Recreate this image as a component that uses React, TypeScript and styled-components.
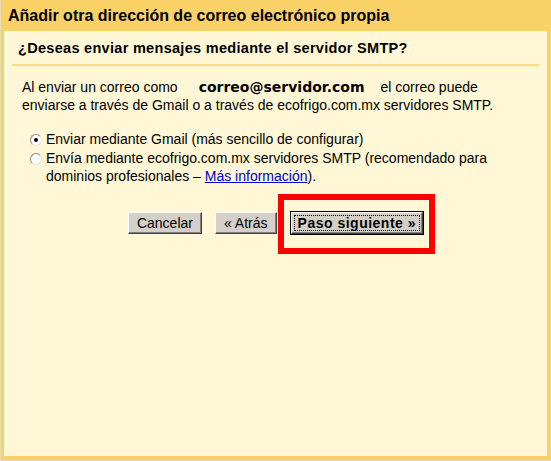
import React from "react";
import styled, { createGlobalStyle } from "styled-components";

const Global = createGlobalStyle`
  html, body { margin: 0; padding: 0; background: #fff; }
  body { font-family: "Liberation Sans", Arial, sans-serif; }
`;

const Frame = styled.div`
  width: 551px;
  height: 461px;
  box-sizing: border-box;
  background: #f9d167;
  display: flex;
  flex-direction: column;
  padding: 0 4px 4px 3px;
  border-left: 1px solid #e9dcae;
  border-bottom: 1px solid #e6dcc0;
`;

const Header = styled.div`
  height: 31px;
  display: flex;
  align-items: center;
  padding-left: 4px;
  font-size: 16px;
  font-weight: bold;
  color: #000;
  flex-shrink: 0;
`;

const Body = styled.div`
  flex: 1;
  background: #fff7d6;
  padding: 0 8px;
  display: flex;
  flex-direction: column;
`;

const Subtitle = styled.div`
  height: 35px;
  box-sizing: border-box;
  display: flex;
  align-items: center;
  padding-left: 6px;
  font-size: 14.5px;
  font-weight: bold;
  letter-spacing: 0.3px;
  border-bottom: 2px solid #f6dc88;
`;

const Paragraph = styled.p`
  margin: 12px 0 0 10px;
  font-size: 14px;
  line-height: 18px;
  color: #000;
`;

const Address = styled.b`
  font-family: "DejaVu Sans", Verdana, sans-serif;
  font-size: 14px;
  margin: 0 16px 0 21px;
`;

const Options = styled.div`
  margin: 16px 0 0 17px;
  display: flex;
  flex-direction: column;
`;

const Option = styled.label`
  display: flex;
  align-items: flex-start;
  font-size: 14px;
  line-height: 18.5px;
`;

const Radio = styled.span<{ $checked?: boolean }>`
  flex-shrink: 0;
  width: 10px;
  height: 10px;
  margin: 4px 4px 0 1px;
  border-radius: 50%;
  background: #fff;
  border: 1px solid #8a8a8a;
  border-right-color: #e4e4e4;
  border-bottom-color: #e4e4e4;
  display: flex;
  align-items: center;
  justify-content: center;
  &::after {
    content: "";
    width: 4px;
    height: 4px;
    border-radius: 50%;
    background: #000;
    display: ${(p) => (p.$checked ? "block" : "none")};
  }
`;

const Link = styled.a`
  color: #0000cc;
  text-decoration: underline;
`;

const Buttons = styled.div`
  margin-top: 26px;
  display: flex;
  justify-content: center;
  gap: 13px;
`;

const Button = styled.button<{ $primary?: boolean }>`
  position: relative;
  height: 22px;
  box-sizing: border-box;
  padding: 0 ${(p) => (p.$primary ? "6px" : "8px")};
  background: #d4d0c8;
  font-family: "Liberation Sans", Arial, sans-serif;
  font-size: 14px;
  font-weight: ${(p) => (p.$primary ? "bold" : "normal")};
  letter-spacing: ${(p) => (p.$primary ? "0.5px" : "0")};
  color: #000;
  border: 1px solid;
  border-color: #ffffff #404040 #404040 #ffffff;
  box-shadow: ${(p) =>
    p.$primary
      ? "0 0 0 1px #000, inset -1px -1px 0 #808080"
      : "inset -1px -1px 0 #808080"};
  margin-left: ${(p) => (p.$primary ? "1px" : "0")};
`;

const FocusRing = styled.span`
  position: absolute;
  inset: 2px;
  border: 1px dotted #000;
  pointer-events: none;
`;

const Highlight = styled.span`
  position: absolute;
  left: -14px;
  right: -13px;
  top: -19px;
  bottom: -21px;
  border: 6px solid #ff0000;
  pointer-events: none;
`;

export default function App() {
  return (
    <>
      <Global />
      <Frame>
        <Header>Añadir otra dirección de correo electrónico propia</Header>
        <Body>
          <Subtitle>¿Deseas enviar mensajes mediante el servidor SMTP?</Subtitle>
          <Paragraph>
            Al enviar un correo como<Address>correo@servidor.com</Address>el correo puede
            <br />
            enviarse a través de Gmail o a través de ecofrigo.com.mx servidores SMTP.
          </Paragraph>
          <Options>
            <Option>
              <Radio $checked />
              <span>Enviar mediante Gmail (más sencillo de configurar)</span>
            </Option>
            <Option>
              <Radio />
              <span>
                Envía mediante ecofrigo.com.mx servidores SMTP (recomendado para
                <br />
                dominios profesionales – <Link href="#">Más información</Link>).
              </span>
            </Option>
          </Options>
          <Buttons>
            <Button>Cancelar</Button>
            <Button>« Atrás</Button>
            <Button $primary>
              Paso siguiente »
              <FocusRing />
              <Highlight />
            </Button>
          </Buttons>
        </Body>
      </Frame>
    </>
  );
}
